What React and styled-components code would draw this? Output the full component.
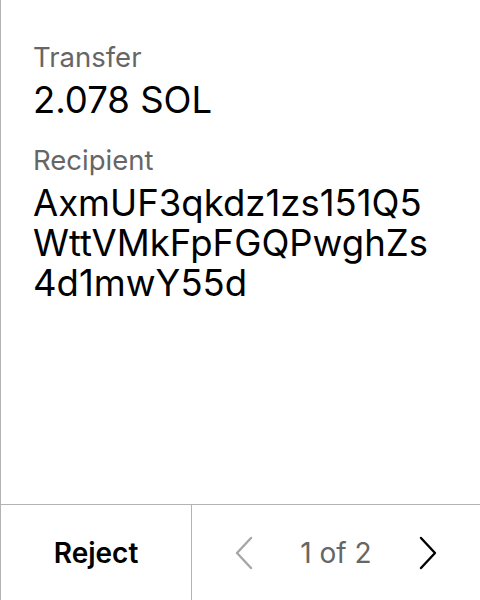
import styled, { createGlobalStyle } from "styled-components";

const Global = createGlobalStyle`
  html, body { margin: 0; padding: 0; background: #fff; }
  body { font-family: Inter, "Noto Sans", sans-serif; }
  * { box-sizing: border-box; }
`;

const Style = {
  Screen: styled.div`
    width: 480px;
    height: 600px;
    display: flex;
    flex-direction: column;
    border-left: 1px solid #b3b3b3;
    background: #fff;
  `,
  Body: styled.div`
    flex: 1;
    padding: 40px 20px 0 32px;
    display: flex;
    flex-direction: column;
    gap: 23px;
  `,
  Field: styled.div`
    display: flex;
    flex-direction: column;
    gap: 6px;
  `,
  Label: styled.div`
    font-size: 27.5px;
    line-height: 34px;
    color: #666;
  `,
  Value: styled.div`
    font-size: 36.5px;
    line-height: 40px;
    color: #000;
  `,
  Line: styled.span`
    display: block;
  `,
  Footer: styled.div`
    height: 96px;
    border-top: 1px solid #b3b3b3;
    display: grid;
    grid-template-columns: 191px 1fr;
  `,
  Reject: styled.button`
    border: none;
    border-right: 1px solid #b3b3b3;
    background: none;
    font-family: inherit;
    font-size: 28px;
    font-weight: 600;
    color: #000;
    cursor: pointer;
  `,
  Pager: styled.div`
    display: flex;
    align-items: center;
    justify-content: space-between;
    padding: 0 40px 0 40px;
  `,
  Arrow: styled.button`
    border: none;
    background: none;
    padding: 0;
    width: 24px;
    height: 36px;
    display: flex;
    align-items: center;
    justify-content: center;
    color: ${(p) => (p.disabled ? "#a6a6a6" : "#000")};
  `,
  Count: styled.span`
    font-size: 28px;
    color: #666;
  `,
};

const Chevron = ({ dir }) => (
  <svg width="20" height="34" viewBox="0 0 20 34" fill="none">
    <path
      d={dir === "left" ? "M17 2 L3 17 L17 32" : "M3 2 L17 17 L3 32"}
      stroke="currentColor"
      strokeWidth="2.4"
      strokeLinecap="round"
      strokeLinejoin="round"
    />
  </svg>
);

const recipient = ["AxmUF3qkdz1zs151Q5", "WttVMkFpFGQPwghZs", "4d1mwY55d"];

export default function App() {
  return (
    <>
      <Global />
      <Style.Screen>
        <Style.Body>
          <Style.Field>
            <Style.Label>Transfer</Style.Label>
            <Style.Value>2.078 SOL</Style.Value>
          </Style.Field>
          <Style.Field>
            <Style.Label>Recipient</Style.Label>
            <Style.Value>
              {recipient.map((part) => (
                <Style.Line key={part}>{part}</Style.Line>
              ))}
            </Style.Value>
          </Style.Field>
        </Style.Body>
        <Style.Footer>
          <Style.Reject>Reject</Style.Reject>
          <Style.Pager>
            <Style.Arrow disabled>
              <Chevron dir="left" />
            </Style.Arrow>
            <Style.Count>1 of 2</Style.Count>
            <Style.Arrow>
              <Chevron dir="right" />
            </Style.Arrow>
          </Style.Pager>
        </Style.Footer>
      </Style.Screen>
    </>
  );
}
